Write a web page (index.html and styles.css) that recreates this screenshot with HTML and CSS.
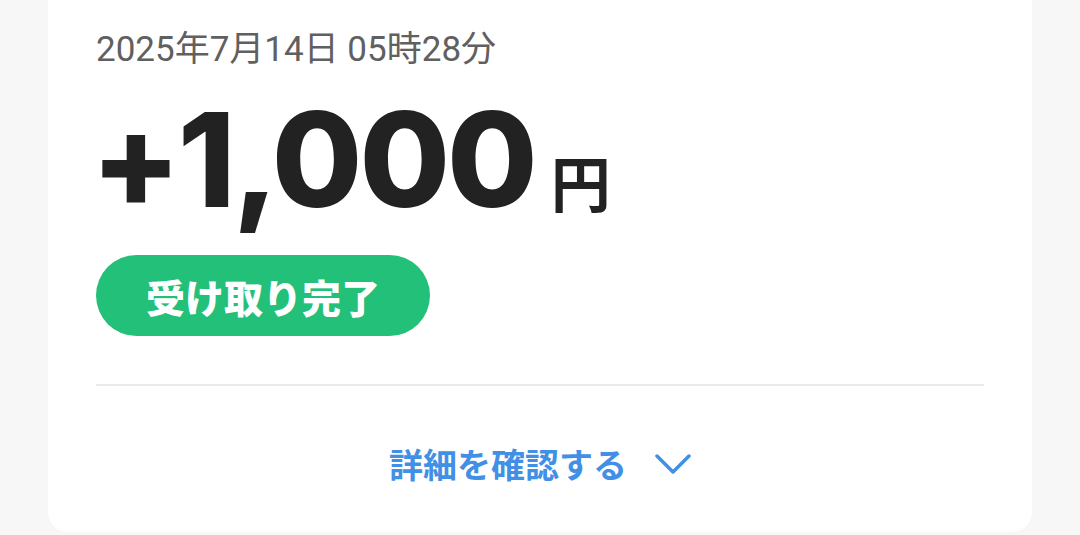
FILE: index.html
```html
<!DOCTYPE html>
<html lang="ja">
<head>
  <meta charset="UTF-8" />
  <meta name="viewport" content="width=device-width, initial-scale=1.0"/>
  <title>受け取り詳細</title>
  <link rel="stylesheet" href="styles.css">
</head>
<body>

  <main class="page">
    <section class="card">
      <p class="date">2025年7月14日 05時28分</p>

      <div class="amount">
        <span class="amount-value">+1,000</span>
        <span class="amount-unit">円</span>
      </div>

      <div class="status">受け取り完了</div>

      <hr class="divider">

      <div class="details-link">
        <span>詳細を確認する</span>
        <svg class="chevron" width="36" height="22" viewBox="0 0 36 22" aria-hidden="true">
          <path d="M2 3 L18 19 L34 3" fill="none" stroke="currentColor" stroke-width="3.5" stroke-linecap="round" stroke-linejoin="round"/>
        </svg>
      </div>
    </section>
  </main>

</body>
</html>
```

FILE: styles.css
```css
body {
  margin: 0;
  padding: 0;
  background: #f7f7f7;
  font-family: Roboto, "Noto Sans CJK JP", sans-serif;
  color: #222;
}

.page {
  padding: 0 48px 3px;
}

.card {
  background: #fff;
  border-radius: 0 0 20px 20px;
  padding: 30px 48px 0;
}

.date {
  margin: 0;
  font-size: 35px;
  line-height: 40px;
  color: #606060;
}

.amount {
  display: flex;
  align-items: baseline;
  margin-top: 24px;
  line-height: 1;
}

.amount-value {
  margin-left: -5px;
  font-family: Inter, Roboto, sans-serif;
  font-weight: 800;
  font-size: 131px;
  line-height: 132px;
  letter-spacing: -3px;
  color: #222;
}

.amount-unit {
  margin-left: 16px;
  font-family: "Noto Sans CJK JP", sans-serif;
  font-weight: 700;
  font-size: 60px;
  color: #222;
}

.status {
  display: inline-flex;
  align-items: center;
  height: 81px;
  margin-top: 29px;
  padding: 0 50px;
  border-radius: 41px;
  background: #23c07a;
  color: #fff;
  font-family: "Noto Sans CJK JP", sans-serif;
  font-weight: 900;
  font-size: 39px;
}

.divider {
  margin: 48px 0 0;
  border: 0;
  height: 2px;
  background: #ebebeb;
}

.details-link {
  display: flex;
  justify-content: center;
  align-items: center;
  gap: 28px;
  padding: 56px 0 46px;
  line-height: 44px;
  color: #4290e5;
  font-family: "Noto Sans CJK JP", sans-serif;
  font-weight: 700;
  font-size: 34px;
}

.chevron {
  display: block;
}
```
